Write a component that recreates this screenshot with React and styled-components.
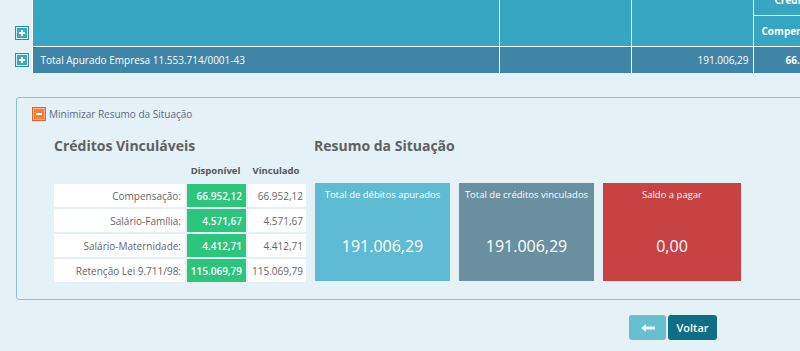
import React from "react";
import styled, { createGlobalStyle } from "styled-components";

const GlobalStyle = createGlobalStyle`
  html, body {
    margin: 0;
    padding: 0;
    background: #e4f1f6;
    overflow: hidden;
  }
  body {
    font-family: "Open Sans", "Noto Sans", sans-serif;
    width: 800px;
    height: 351px;
  }
`;

const Page = styled.div`
  width: 800px;
  height: 351px;
  overflow: hidden;
`;

const TopWrap = styled.div`
  margin-top: -10px;
  width: 800px;
  overflow: hidden;
`;

const TopTable = styled.table`
  width: 880px;
  table-layout: fixed;
  border-collapse: collapse;
  color: #fff;
  font-size: 10px;
`;

const Gutter = styled.td`
  width: 32px;
  padding: 0 0 ${(p) => p.$pb || 0}px 0;
  vertical-align: ${(p) => p.$va || "middle"};
  background: #e4f1f6;
`;

const Th = styled.th`
  background: #36a6c2;
  border: 1px solid #fff;
  border-top: none;
  height: ${(p) => p.$h || 0}px;
  padding: 0 0 ${(p) => p.$pb || 0}px ${(p) => p.$pl || 8}px;
  font-weight: 700;
  text-align: left;
  white-space: nowrap;
  overflow: hidden;
`;

const Td = styled.td`
  background: #3e85a8;
  border: 1px solid #fff;
  border-bottom: none;
  height: 26px;
  padding: 0 ${(p) => (p.$right ? "4px" : "0")} 0 ${(p) => (p.$right ? "0" : `${p.$pl || 8}px`)};
  text-align: ${(p) => (p.$right ? "right" : "left")};
  font-weight: ${(p) => (p.$bold ? 700 : 400)};
  white-space: nowrap;
  overflow: hidden;
`;

const ToggleIcon = styled.span`
  display: block;
  width: 12px;
  height: 12px;
  margin-left: 15px;
  border: 1px solid ${(p) => (p.$orange ? "#e2662a" : "#2f8dac")};
  box-shadow: inset 0 0 0 1px ${(p) => (p.$orange ? "#ffb28a" : "#d6eef5")};
  background: ${(p) => (p.$orange ? "#f47c3c" : "#3ea5c3")};
  position: relative;
  &::before {
    content: "";
    position: absolute;
    left: 3px;
    right: 3px;
    top: 5px;
    height: 2px;
    background: #fff;
  }
  &::after {
    content: "";
    display: ${(p) => (p.$minus ? "none" : "block")};
    position: absolute;
    top: 3px;
    bottom: 3px;
    left: 5px;
    width: 2px;
    background: #fff;
  }
`;

const Panel = styled.div`
  margin: 24px 0 0 16px;
  width: 820px;
  height: 201px;
  border: 1px solid #8fc2cf;
  border-radius: 3px;
  box-sizing: content-box;
`;

const ToggleRow = styled.div`
  display: flex;
  align-items: center;
  gap: 3px;
  padding: 9px 0 0 0;
  font-size: 10px;
  color: #5b6888;
`;

const Sections = styled.div`
  display: flex;
  padding: 15px 0 0 35px;
  gap: 6px;
`;

const Section = styled.div`
  display: flex;
  flex-direction: column;
`;

const Heading = styled.div`
  font-size: 14px;
  font-weight: 700;
  color: #606060;
  padding-left: ${(p) => p.$pl || 0}px;
  height: 20px;
  line-height: 20px;
`;

const CreditTable = styled.table`
  border-collapse: separate;
  border-spacing: 2px;
  margin: 5px 0 0 0;
  font-size: 10px;
  color: #666;
`;

const ColHead = styled.th`
  font-size: 9.5px;
  font-weight: 700;
  color: #555;
  text-align: center;
  padding: 0 2px 5px 0;
  height: 14px;
`;

const Label = styled.td`
  background: #fff;
  width: 127px;
  height: 23px;
  padding: 0 4px 0 0;
  text-align: right;
  white-space: nowrap;
`;

const Avail = styled.td`
  background: #2dc47b;
  color: #fff;
  font-weight: 600;
  width: 55px;
  padding: 0 4px 0 0;
  text-align: right;
  white-space: nowrap;
`;

const Linked = styled.td`
  background: #fff;
  width: 55px;
  padding: 0 3px 0 0;
  text-align: right;
  white-space: nowrap;
`;

const Cards = styled.div`
  display: flex;
  gap: 9px;
  margin: 27px 0 0 1px;
`;

const Card = styled.div`
  width: ${(p) => p.$w}px;
  height: 98px;
  background: ${(p) => p.$bg};
  color: #fff;
  display: flex;
  flex-direction: column;
  align-items: center;
`;

const CardTitle = styled.div`
  font-size: 9.5px;
  margin-top: 5px;
  white-space: nowrap;
`;

const CardValue = styled.div`
  font-size: 16px;
  margin-top: 34px;
`;

const Actions = styled.div`
  display: flex;
  justify-content: flex-end;
  gap: 2px;
  margin: 15px 83px 0 0;
`;

const Button = styled.button`
  height: 25px;
  width: ${(p) => p.$w}px;
  border: none;
  border-radius: 3px;
  background: ${(p) => (p.$dark ? "#0e6e86" : "#67bfd0")};
  color: #fff;
  font-family: inherit;
  font-size: 11px;
  font-weight: 600;
  padding: 0;
  display: flex;
  align-items: center;
  justify-content: center;
`;

const credits = [
  ["Compensação:", "66.952,12", "66.952,12"],
  ["Salário-Família:", "4.571,67", "4.571,67"],
  ["Salário-Maternidade:", "4.412,71", "4.412,71"],
  ["Retenção Lei 9.711/98:", "115.069,79", "115.069,79"],
];

const cards = [
  { title: "Total de débitos apurados", value: "191.006,29", bg: "#5fbad4", w: 135 },
  { title: "Total de créditos vinculados", value: "191.006,29", bg: "#6a8fa1", w: 135 },
  { title: "Saldo a pagar", value: "0,00", bg: "#c84143", w: 138 },
];

export default function App() {
  return (
    <Page>
      <GlobalStyle />
      <TopWrap>
        <TopTable>
          <colgroup>
            <col style={{ width: 32 }} />
            <col style={{ width: 467 }} />
            <col style={{ width: 132 }} />
            <col style={{ width: 122 }} />
            <col style={{ width: 127 }} />
          </colgroup>
          <thead>
            <tr>
              <Gutter rowSpan={2} $va="bottom" $pb={7}>
                <ToggleIcon />
              </Gutter>
              <Th rowSpan={2} />
              <Th rowSpan={2} />
              <Th rowSpan={2} />
              <Th $h={19} $pb={6} $pl={21}>Créditos</Th>
            </tr>
            <tr>
              <Th $h={30}>Compensação</Th>
            </tr>
          </thead>
          <tbody>
            <tr>
              <Gutter>
                <ToggleIcon />
              </Gutter>
              <Td>Total Apurado Empresa 11.553.714/0001-43</Td>
              <Td />
              <Td $right>191.006,29</Td>
              <Td $bold $pl={32}>66.952,12</Td>
            </tr>
          </tbody>
        </TopTable>
      </TopWrap>

      <Panel>
        <ToggleRow>
          <ToggleIcon $orange $minus />
          <span>Minimizar Resumo da Situação</span>
        </ToggleRow>
        <Sections>
          <Section>
            <Heading $pl={2}>Créditos Vinculáveis</Heading>
            <CreditTable>
              <thead>
                <tr>
                  <th />
                  <ColHead>Disponível</ColHead>
                  <ColHead>Vinculado</ColHead>
                </tr>
              </thead>
              <tbody>
                {credits.map(([label, avail, linked]) => (
                  <tr key={label}>
                    <Label>{label}</Label>
                    <Avail>{avail}</Avail>
                    <Linked>{linked}</Linked>
                  </tr>
                ))}
              </tbody>
            </CreditTable>
          </Section>
          <Section>
            <Heading>Resumo da Situação</Heading>
            <Cards>
              {cards.map((c) => (
                <Card key={c.title} $bg={c.bg} $w={c.w}>
                  <CardTitle>{c.title}</CardTitle>
                  <CardValue>{c.value}</CardValue>
                </Card>
              ))}
            </Cards>
          </Section>
        </Sections>
      </Panel>

      <Actions>
        <Button $w={37}>
          <svg width="16" height="10" viewBox="0 0 16 10">
            <path d="M1 5 L6 1 L6 3.5 L15 3.5 L15 6.5 L6 6.5 L6 9 Z" fill="#e8f6fa" />
          </svg>
        </Button>
        <Button $w={49} $dark>
          Voltar
        </Button>
      </Actions>
    </Page>
  );
}
